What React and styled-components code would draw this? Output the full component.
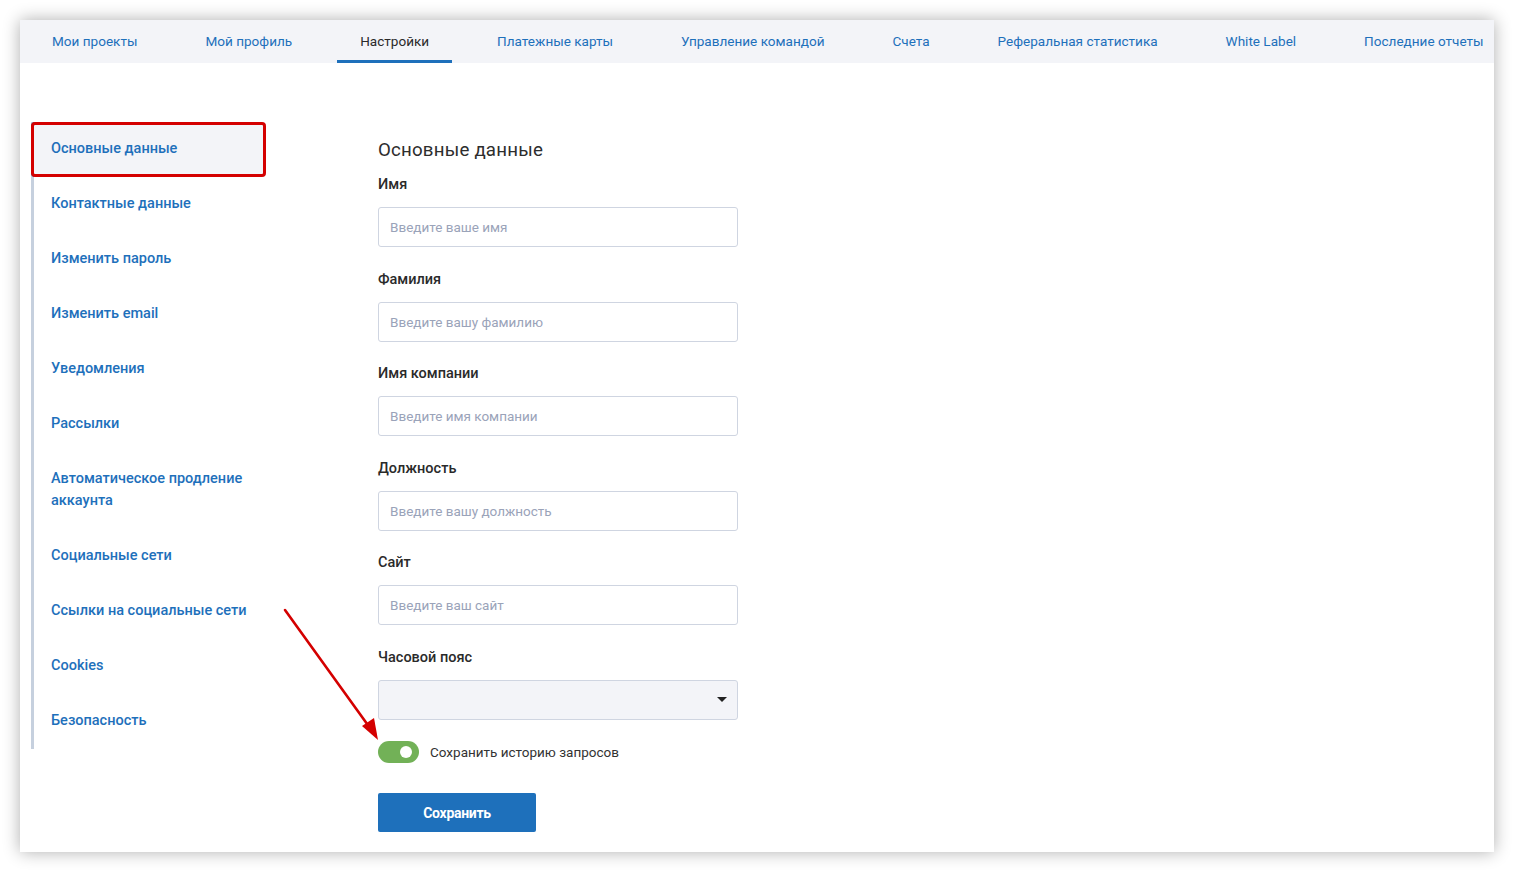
import React, { useState } from "react";
import styled, { createGlobalStyle } from "styled-components";

const GlobalStyle = createGlobalStyle`
  html, body {
    margin: 0;
    padding: 0;
    background: #ffffff;
  }
  body {
    font-family: Roboto, "Liberation Sans", Arial, sans-serif;
    color: #2b2b2b;
  }
  * {
    box-sizing: border-box;
  }
`;

const tabs = [
  "Мои проекты",
  "Мой профиль",
  "Настройки",
  "Платежные карты",
  "Управление командой",
  "Счета",
  "Реферальная статистика",
  "White Label",
  "Последние отчеты",
];

const menu = [
  "Основные данные",
  "Контактные данные",
  "Изменить пароль",
  "Изменить email",
  "Уведомления",
  "Рассылки",
  "Автоматическое продление аккаунта",
  "Социальные сети",
  "Ссылки на социальные сети",
  "Cookies",
  "Безопасность",
];

const fields = [
  { label: "Имя", placeholder: "Введите ваше имя" },
  { label: "Фамилия", placeholder: "Введите вашу фамилию" },
  { label: "Имя компании", placeholder: "Введите имя компании" },
  { label: "Должность", placeholder: "Введите вашу должность" },
  { label: "Сайт", placeholder: "Введите ваш сайт" },
];

function App() {
  const [saveHistory, setSaveHistory] = useState(true);

  return (
    <>
      <GlobalStyle />
      <Page>
        <Panel>
          <TabBar>
            {tabs.map((t) => (
              <Tab key={t} $active={t === "Настройки"}>
                {t}
              </Tab>
            ))}
          </TabBar>

          <Body>
            <Sidebar>
              {menu.map((m, i) => (
                <MenuItem key={m} $active={i === 0}>
                  {i === 6 ? (
                    <>
                      Автоматическое продление
                      <br />
                      аккаунта
                    </>
                  ) : (
                    m
                  )}
                </MenuItem>
              ))}
            </Sidebar>

            <Form>
              <Title>Основные данные</Title>
              {fields.map((f) => (
                <Field key={f.label}>
                  <Label>{f.label}</Label>
                  <Input placeholder={f.placeholder} />
                </Field>
              ))}
              <Field>
                <Label>Часовой пояс</Label>
                <Select>
                  <Caret />
                </Select>
              </Field>

              <ToggleRow onClick={() => setSaveHistory(!saveHistory)}>
                <Toggle $on={saveHistory}>
                  <Knob $on={saveHistory} />
                </Toggle>
                <ToggleText>Сохранить историю запросов</ToggleText>
              </ToggleRow>

              <SaveButton>Сохранить</SaveButton>
            </Form>

            {/* red pointer to the history toggle */}
            <Pointer width="110" height="140" viewBox="0 0 110 140">
              <line
                x1="6"
                y1="7"
                x2="91"
                y2="125"
                stroke="#d40000"
                strokeWidth="2.6"
                strokeLinecap="round"
              />
              <polygon points="99,137 83,123 95,115" fill="#d40000" />
            </Pointer>
          </Body>
        </Panel>
      </Page>
    </>
  );
}

export default App;

const Page = styled.div`
  width: 1514px;
  height: 872px;
  padding: 20px;
  background: #ffffff;
`;

const Panel = styled.div`
  width: 1474px;
  height: 832px;
  background: #ffffff;
  box-shadow: 0 0 16px rgba(0, 0, 0, 0.32);
  overflow: hidden;
`;

const TabBar = styled.div`
  display: flex;
  gap: 22px;
  height: 43px;
  padding-left: 9px;
  background: #f3f4f8;
  white-space: nowrap;
`;

const Tab = styled.div`
  display: flex;
  align-items: center;
  padding: 2px 23px 0;
  font-size: 13.55px;
  color: ${(p) => (p.$active ? "#2a2a2a" : "#1e70bb")};
  border-bottom: 3px solid ${(p) => (p.$active ? "#1e70bb" : "transparent")};
`;

const Body = styled.div`
  position: relative;
  display: flex;
  align-items: flex-start;
  padding: 59px 0 0 11px;
`;

const Sidebar = styled.div`
  width: 235px;
  border-left: 3px solid #c6d0de;
`;

const MenuItem = styled.div`
  position: relative;
  margin-left: -3px;
  padding: 16px 12px 17px 17px;
  line-height: 22px;
  font-size: 14.5px;
  font-weight: 500;
  color: #1e70bb;
  border-left: 3px solid ${(p) => (p.$active ? "#1e70bb" : "transparent")};
  background: ${(p) => (p.$active ? "#f3f4f8" : "transparent")};
  outline: ${(p) => (p.$active ? "3px solid #d40000" : "none")};
  outline-offset: -3px;
  border-radius: ${(p) => (p.$active ? "4px" : "0")};
`;

const Form = styled.div`
  width: 360px;
  margin-left: 112px;
  padding-top: 16px;
  display: flex;
  flex-direction: column;
`;

const Title = styled.div`
  font-size: 18.7px;
  line-height: 24px;
  color: #2d2d2d;
  letter-spacing: 0.2px;
  margin-bottom: 8px;
`;

const Field = styled.div`
  display: flex;
  flex-direction: column;
  margin-top: 5px;
  margin-bottom: 17.5px;
`;

const Label = styled.div`
  font-size: 14.5px;
  font-weight: 500;
  line-height: 20px;
  color: #2a2a2a;
  margin-bottom: 12px;
`;

const Input = styled.input`
  width: 360px;
  height: 40px;
  padding: 0 11px;
  border: 1px solid #cfd5e1;
  border-radius: 3px;
  font-family: Roboto, "Liberation Sans", Arial, sans-serif;
  font-size: 13.5px;
  color: #333;
  outline: none;

  &::placeholder {
    color: #9aa3b9;
  }
`;

const Select = styled.div`
  position: relative;
  width: 360px;
  height: 40px;
  border: 1px solid #cfd5e1;
  border-radius: 3px;
  background: #f3f4f8;
`;

const Caret = styled.span`
  position: absolute;
  right: 10px;
  top: 16px;
  border-left: 5px solid transparent;
  border-right: 5px solid transparent;
  border-top: 5px solid #222;
`;

const ToggleRow = styled.div`
  display: flex;
  align-items: center;
  gap: 11px;
  margin-top: 4px;
  cursor: pointer;
`;

const Toggle = styled.div`
  display: flex;
  align-items: center;
  justify-content: ${(p) => (p.$on ? "flex-end" : "flex-start")};
  width: 41px;
  height: 22px;
  padding: 0 7px;
  border-radius: 11px;
  background: ${(p) => (p.$on ? "#72b157" : "#c6d0de")};
`;

const Knob = styled.span`
  width: 12px;
  height: 12px;
  border-radius: 50%;
  background: #ffffff;
`;

const ToggleText = styled.span`
  font-size: 13.5px;
  color: #333;
`;

const SaveButton = styled.button`
  width: 158px;
  height: 39px;
  margin-top: 30px;
  border: none;
  border-radius: 2px;
  background: #1e70bb;
  color: #ffffff;
  font-family: Roboto, "Liberation Sans", Arial, sans-serif;
  font-size: 14px;
  font-weight: 700;
  letter-spacing: -0.3px;
  cursor: pointer;
`;

const Pointer = styled.svg`
  position: absolute;
  left: 259px;
  top: 540px;
  pointer-events: none;
`;
